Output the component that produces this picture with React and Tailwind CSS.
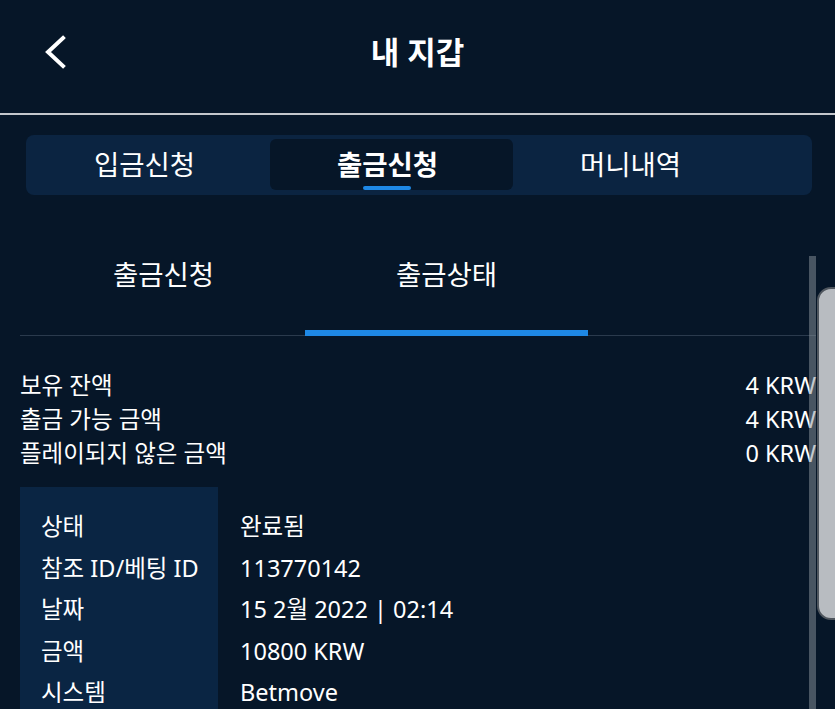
import React from 'react';

const font = { fontFamily: '"Noto Sans", "Noto Sans CJK KR", sans-serif' };

const balances = [
  ['보유 잔액', '4 KRW'],
  ['출금 가능 금액', '4 KRW'],
  ['플레이되지 않은 금액', '0 KRW'],
];

const details = [
  ['상태', '완료됨'],
  ['참조 ID/베팅 ID', '113770142'],
  ['날짜', '15 2월 2022 | 02:14'],
  ['금액', '10800 KRW'],
  ['시스템', 'Betmove'],
];

const App = () => {
  return (
    <div
      className="relative w-[835px] h-[709px] overflow-hidden bg-[#061628] text-white"
      style={font}
    >
      {/* Header */}
      <header className="relative h-[115px] flex items-center justify-center pb-[8px] border-b-2 border-[#c3c7cc]">
        <button className="absolute left-[44px] top-[35px] w-[24px] h-[34px]">
          <svg width="24" height="34" viewBox="0 0 24 34" fill="none">
            <polyline
              points="19,3 4,17 19,31"
              stroke="white"
              strokeWidth="4"
              strokeLinecap="square"
              strokeLinejoin="miter"
            />
          </svg>
        </button>
        <h1 className="text-[31px] font-bold leading-none">내 지갑</h1>
      </header>

      {/* Main tabs */}
      <div className="mt-[20px] ml-[26px] mr-[23px] h-[60px] rounded-[8px] bg-[#0b2441] flex items-stretch pl-[1px] pt-[4px] pb-[5px]">
        <div className="w-[243px] flex items-center justify-center pr-2 text-[27.5px]">입금신청</div>
        <div className="relative w-[243px] flex items-center justify-center pr-2 text-[27.5px] font-bold rounded-[6px] bg-[#061628]">
          출금신청
          <span className="absolute bottom-0 left-[93px] w-[48px] h-[4px] rounded-full bg-[#1e88e5]" />
        </div>
        <div className="w-[243px] flex items-center justify-center pr-2 text-[27.5px]">머니내역</div>
      </div>

      {/* Sub tabs */}
      <div className="mt-[20px] ml-[20px] mr-[19px] border-b border-[#2a3a4d] flex pl-[2px]">
        <div className="w-[283px] h-[120px] flex items-center justify-center text-[27.5px]">출금신청</div>
        <div className="relative w-[283px] h-[120px] flex items-center justify-center text-[27.5px]">
          출금상태
          <span className="absolute -bottom-px left-0 right-0 h-[6px] bg-[#1e88e5]" />
        </div>
      </div>

      {/* Balances */}
      <div className="mt-[33px] ml-[20px] mr-[19px] flex flex-col">
        {balances.map(([label, value]) => (
          <div key={label} className="h-[34px] flex items-center justify-between text-[23.5px]">
            <span>{label}</span>
            <span>{value}</span>
          </div>
        ))}
      </div>

      {/* Detail table */}
      <div className="mt-[16px] ml-[20px] flex">
        <div className="w-[198px] bg-[#0a2543] pt-[19px] pl-[21px] pb-[20px]">
          {details.map(([label]) => (
            <div key={label} className="h-[41.5px] flex items-center text-[23.5px] whitespace-nowrap">
              {label}
            </div>
          ))}
        </div>
        <div className="pt-[19px] pl-[22px]">
          {details.map(([label, value]) => (
            <div key={label} className="h-[41.5px] flex items-center text-[23.5px] whitespace-nowrap">
              {value}
            </div>
          ))}
        </div>
      </div>

      {/* Scrollbar */}
      <div className="absolute left-[809px] top-[256px] w-[7px] h-[460px] bg-[#8a939c]/50" />

      {/* Device edge */}
      <div className="absolute left-[817px] top-[287px] w-[30px] h-[333px] rounded-l-[14px] bg-[#b8bcc1] border-2 border-[#4f565e]" />
    </div>
  );
};

export default App;
